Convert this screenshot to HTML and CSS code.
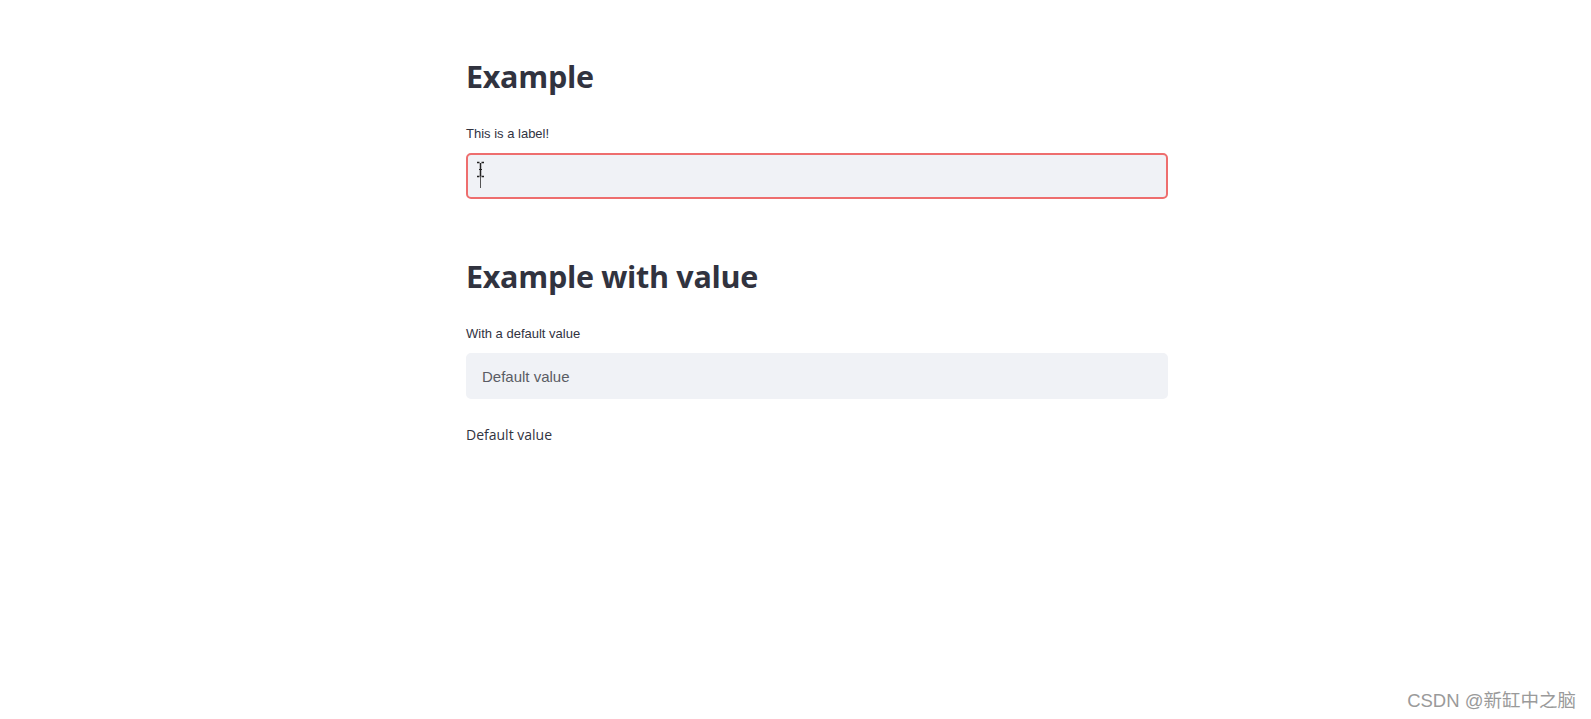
FILE: index.html
```html
<!DOCTYPE html>
<html lang="en">
<head>
<meta charset="utf-8">
<title>Example</title>
<link rel="stylesheet" href="styles.css">
</head>
<body>
<main class="main">
  <section class="block block-first">
    <h2 class="heading">Example</h2>
    <label class="label">This is a label!</label>
    <div class="input input-focus">
      <span class="caret"></span>
      <svg class="ibeam" width="9" height="17" viewBox="0 0 9 17" aria-hidden="true">
        <path d="M1 1.5h2.5M5.5 1.5H8M4.5 2v13M1 15.5h2.5M5.5 15.5H8" stroke="#222" stroke-width="1.5" fill="none"/>
        <path d="M3 8.5h3" stroke="#222" stroke-width="1"/>
      </svg>
    </div>
  </section>
  <section class="block block-second">
    <h2 class="heading">Example with value</h2>
    <label class="label">With a default value</label>
    <div class="input"><span class="input-text">Default value</span></div>
    <p class="output">Default value</p>
  </section>
</main>
<div class="watermark">CSDN @新缸中之脑</div>
</body>
</html>
```

FILE: styles.css
```css
html, body {
  margin: 0;
  padding: 0;
  background: #ffffff;
}
body {
  width: 1591px;
  height: 719px;
  position: relative;
  overflow: hidden;
  font-family: "Liberation Sans", Arial, sans-serif;
  color: #31333f;
}
.main {
  display: flex;
  flex-direction: column;
  width: 702px;
  margin-left: 466px;
  padding-top: 54px;
}
.block {
  display: flex;
  flex-direction: column;
}
.block-second {
  margin-top: 55px;
}
.heading {
  margin: 0;
  font-family: "Open Sans", "Noto Sans", sans-serif;
  font-weight: 700;
  font-size: 30.5px;
  line-height: 44px;
  color: #31333f;
  letter-spacing: -0.3px;
}
.label {
  margin-top: 27px;
  font-size: 13px;
  line-height: 18px;
  color: #31333f;
}
.input {
  position: relative;
  margin-top: 10px;
  height: 46px;
  box-sizing: border-box;
  background: #f0f2f6;
  border: 2px solid #f0f2f6;
  border-radius: 5px;
  display: flex;
  align-items: center;
  padding-left: 14px;
}
.input-focus {
  border-color: #ee6e6e;
}
.input-text {
  font-size: 15px;
  color: #5a5c64;
}
.caret {
  position: absolute;
  left: 12px;
  top: 20px;
  width: 1px;
  height: 13px;
  background: #555;
}
.ibeam {
  position: absolute;
  left: 8px;
  top: 6px;
}
.output {
  margin: 26px 0 0;
  font-family: "Open Sans", "Noto Sans", sans-serif;
  font-size: 14px;
  line-height: 20px;
  color: #31333f;
}
.watermark {
  position: absolute;
  right: 15px;
  bottom: 7px;
  font-family: "Liberation Sans", "Noto Sans CJK SC", sans-serif;
  font-size: 18.5px;
  color: #9a9a9a;
}
```
